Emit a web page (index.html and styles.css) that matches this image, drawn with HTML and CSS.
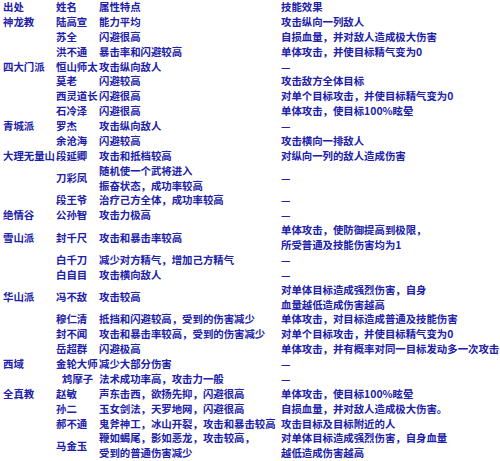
FILE: index.html
```html
<!DOCTYPE html>
<html lang="zh">
<head>
<meta charset="utf-8">
<link rel="stylesheet" href="styles.css">
</head>
<body>
<div class="table">
  <div class="row"><span>出处</span><span>姓名</span><span>属性特点</span><span>技能效果</span></div>
  <div class="row"><span>神龙教</span><span>陆高宣</span><span>能力平均</span><span>攻击纵向一列敌人</span></div>
  <div class="row"><span></span><span>苏全</span><span>闪避很高</span><span>自损血量，并对敌人造成极大伤害</span></div>
  <div class="row"><span></span><span>洪不通</span><span>暴击率和闪避较高</span><span>单体攻击，并使目标精气变为0</span></div>
  <div class="row"><span>四大门派</span><span>恒山师太</span><span>攻击纵向敌人</span><span>—</span></div>
  <div class="row"><span></span><span>莫老</span><span>闪避较高</span><span>攻击敌方全体目标</span></div>
  <div class="row"><span></span><span>西灵道长</span><span>闪避很高</span><span>对单个目标攻击，并使目标精气变为0</span></div>
  <div class="row"><span></span><span>石冷泽</span><span>闪避很高</span><span>单体攻击，使目标100%眩晕</span></div>
  <div class="row"><span>青城派</span><span>罗杰</span><span>攻击纵向敌人</span><span>—</span></div>
  <div class="row"><span></span><span>余沧海</span><span>闪避较高</span><span>攻击横向一排敌人</span></div>
  <div class="row"><span>大理无量山</span><span>段延卿</span><span>攻击和抵档较高</span><span>对纵向一列的敌人造成伤害</span></div>
  <div class="row"><span></span><span>刀彩凤</span><span>随机使一个武将进入<br>振奋状态，成功率较高</span><span>—</span></div>
  <div class="row"><span></span><span>段王爷</span><span>治疗己方全体，成功率较高</span><span>—</span></div>
  <div class="row"><span>绝情谷</span><span>公孙智</span><span>攻击力极高</span><span>—</span></div>
  <div class="row"><span>雪山派</span><span>封千尺</span><span>攻击和暴击率较高</span><span>单体攻击，使防御提高到极限，<br>所受普通及技能伤害均为1</span></div>
  <div class="row"><span></span><span>白千刀</span><span>减少对方精气，增加己方精气</span><span>—</span></div>
  <div class="row"><span></span><span>白自目</span><span>攻击横向敌人</span><span>—</span></div>
  <div class="row"><span>华山派</span><span>冯不敌</span><span>攻击较高</span><span>对单体目标造成强烈伤害，自身<br>血量越低造成伤害越高</span></div>
  <div class="row"><span></span><span>穆仁清</span><span>抵挡和闪避较高，受到的伤害减少</span><span>单体攻击，对目标造成普通及技能伤害</span></div>
  <div class="row"><span></span><span>封不闻</span><span>攻击和暴击率较高，受到的伤害减少</span><span>对单个目标攻击，并使目标精气变为0</span></div>
  <div class="row"><span></span><span>岳超群</span><span>闪避极高</span><span>单体攻击，并有概率对同一目标发动多一次攻击</span></div>
  <div class="row"><span>西域</span><span>金轮大师</span><span>减少大部分伤害</span><span>—</span></div>
  <div class="row"><span></span><span class="indent">鸩摩子</span><span>法术成功率高，攻击力一般</span><span>—</span></div>
  <div class="row"><span>全真教</span><span>赵敏</span><span>声东击西，欲扬先抑，闪避很高</span><span>单体攻击，使目标100%眩晕</span></div>
  <div class="row"><span></span><span>孙二</span><span>玉女剑法，天罗地网，闪避很高</span><span>自损血量，并对敌人造成极大伤害。</span></div>
  <div class="row"><span></span><span>郝不通</span><span>鬼斧神工，冰山开裂，攻击和暴击较高</span><span>攻击目标及目标附近的人</span></div>
  <div class="row"><span></span><span>马金玉</span><span>鞭如蝎尾，影如恶龙，攻击较高，<br>受到的普通伤害减少</span><span>对单体目标造成强烈伤害，自身血量<br>越低造成伤害越高</span></div>
</div>
</body>
</html>
```
FILE: styles.css
```css
html, body {
  margin: 0;
  padding: 0;
  background: #ffffff;
}
.table {
  padding-left: 3px;
  font-family: "Noto Sans CJK SC", "Noto Sans", sans-serif;
  font-size: 10.4px;
  font-weight: bold;
  line-height: 14.87px;
  color: #2020a8;
}
.row {
  display: grid;
  grid-template-columns: 53px 43px 182px 1fr;
  align-items: center;
}
.row span {
  white-space: nowrap;
}
.indent {
  padding-left: 6px;
}
```
